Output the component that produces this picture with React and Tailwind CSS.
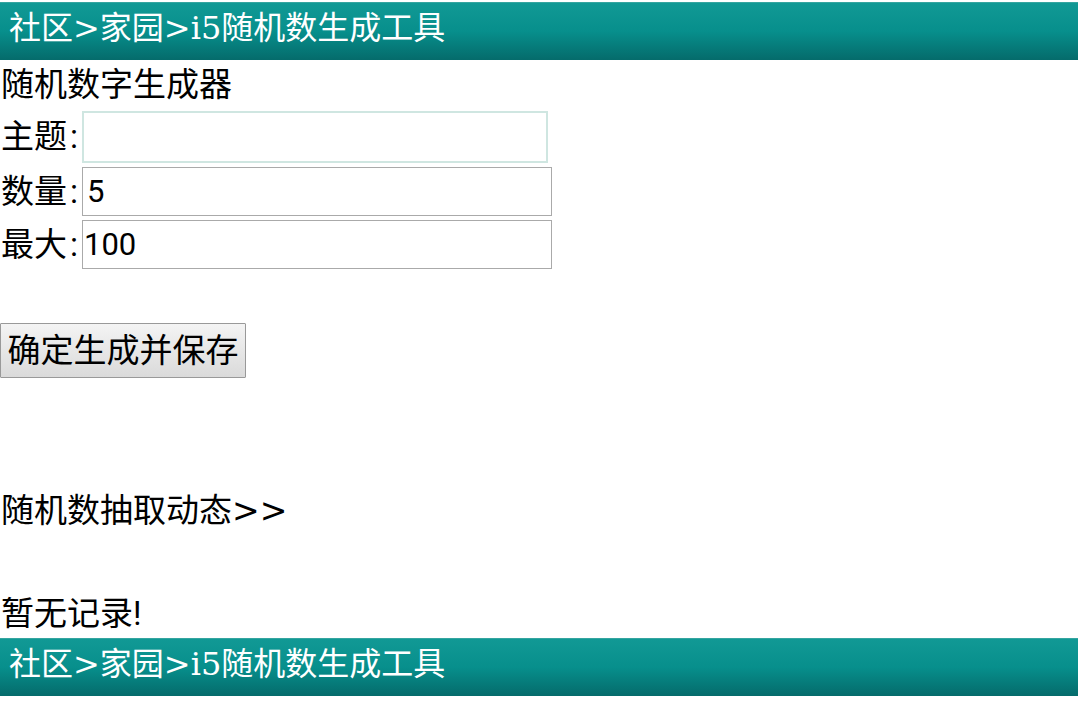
export default function App() {
  const sans = { fontFamily: 'Roboto, "Noto Sans CJK SC", sans-serif' };
  const head = { fontFamily: '"DejaVu Serif", "Noto Sans CJK SC", serif' };
  const cjk = { fontFamily: '"Noto Sans CJK SC", sans-serif' };
  const dv = { fontFamily: '"DejaVu Sans", sans-serif' };
  const Header = () => (
    <div
      className="h-[58px] w-full bg-gradient-to-b from-[#119995] via-[#078f8c] to-[#056b6b] border-t border-[#35a5a0] pl-[9px] text-white text-[32px] leading-[44px] whitespace-nowrap"
      style={head}
    >
      <span style={cjk}>社区</span>&gt;
      <span style={cjk}>家园</span>&gt;i5
      <span style={cjk}>随机数生成工具</span>
    </div>
  );
  return (
    <div className="w-[1078px] h-[701px] bg-white text-black overflow-hidden" style={sans}>
      <div className="h-[2px]" />
      <Header />
      <div className="h-[50px] leading-[50px] text-[33px] pl-[1px] whitespace-nowrap">随机数字生成器</div>
      <div className="flex items-center h-[52px] mt-[1px] text-[33px]">
        <span className="pl-[1px] w-[82px] whitespace-nowrap">
          主题<span className="ml-[3px]">:</span>
        </span>
        <input className="w-[466px] h-[52px] border-2 border-[#cfe6e1] outline-none px-[6px] text-[31px]" />
      </div>
      <div className="flex items-center h-[49px] mt-[4px] text-[33px]">
        <span className="pl-[1px] w-[82px] whitespace-nowrap">
          数量<span className="ml-[3px]">:</span>
        </span>
        <input
          defaultValue="5"
          className="w-[470px] h-[49px] border border-[#aaaaaa] outline-none px-[4px] text-[31px]"
        />
      </div>
      <div className="flex items-center h-[49px] mt-[4px] text-[33px]">
        <span className="pl-[1px] w-[82px] whitespace-nowrap">
          最大<span className="ml-[3px]">:</span>
        </span>
        <input
          defaultValue="100"
          className="w-[470px] h-[49px] border border-[#aaaaaa] outline-none px-[1px] text-[31px]"
        />
      </div>
      <div className="h-[54px]" />
      <button className="h-[55px] w-[246px] border border-[#999999] rounded-[1px] bg-gradient-to-b from-[#f4f4f4] to-[#dadada] text-[33px] leading-[50px] text-black whitespace-nowrap px-0">
        确定生成并保存
      </button>
      <div className="h-[108px]" />
      <div className="h-[50px] leading-[50px] text-[33px] pl-[1px] whitespace-nowrap">
        随机数抽取动态<span style={dv}>&gt;&gt;</span>
      </div>
      <div className="h-[53px]" />
      <div className="h-[49px] leading-[49px] text-[33px] pl-[1px] whitespace-nowrap">暂无记录!</div>
      <Header />
    </div>
  );
}
